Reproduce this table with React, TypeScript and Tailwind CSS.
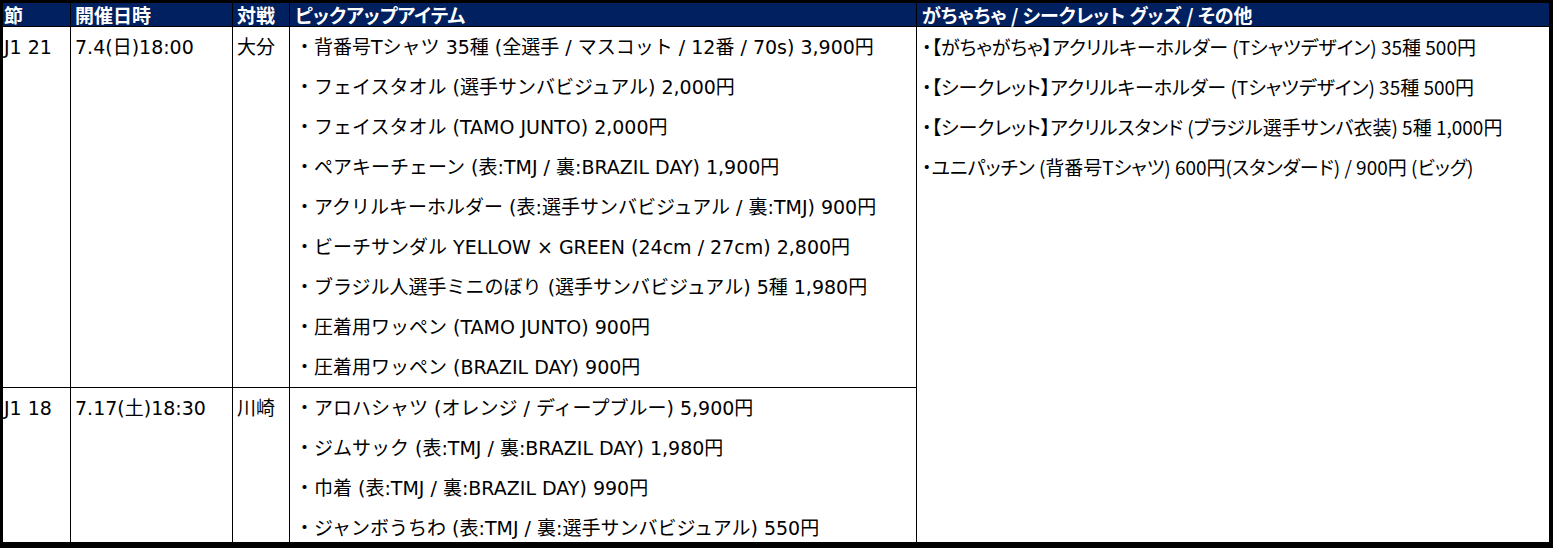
import React from "react";

const row1 = [
  "・背番号Tシャツ 35種 (全選手 / マスコット / 12番 / 70s) 3,900円",
  "・フェイスタオル (選手サンバビジュアル) 2,000円",
  "・フェイスタオル (TAMO JUNTO) 2,000円",
  "・ペアキーチェーン (表:TMJ / 裏:BRAZIL DAY) 1,900円",
  "・アクリルキーホルダー (表:選手サンバビジュアル / 裏:TMJ) 900円",
  "・ビーチサンダル YELLOW × GREEN (24cm / 27cm) 2,800円",
  "・ブラジル人選手ミニのぼり (選手サンバビジュアル) 5種 1,980円",
  "・圧着用ワッペン (TAMO JUNTO) 900円",
  "・圧着用ワッペン (BRAZIL DAY) 900円",
];

const row2 = [
  "・アロハシャツ (オレンジ / ディープブルー) 5,900円",
  "・ジムサック (表:TMJ / 裏:BRAZIL DAY) 1,980円",
  "・巾着 (表:TMJ / 裏:BRAZIL DAY) 990円",
  "・ジャンボうちわ (表:TMJ / 裏:選手サンバビジュアル) 550円",
];

const gacha = [
  "・【がちゃがちゃ】アクリルキーホルダー (Tシャツデザイン) 35種 500円",
  "・【シークレット】アクリルキーホルダー (Tシャツデザイン) 35種 500円",
  "・【シークレット】アクリルスタンド (ブラジル選手サンバ衣装) 5種 1,000円",
  "・ユニパッチン (背番号Tシャツ) 600円(スタンダード) / 900円 (ビッグ)",
];

const bodyFont =
  "[font-family:'DejaVu_Sans','Noto_Sans_CJK_JP',sans-serif] text-[19px] leading-[40px] text-black";

function MatchRow({
  sec,
  date,
  vs,
  items,
  last,
}: {
  sec: string;
  date: string;
  vs: string;
  items: string[];
  last?: boolean;
}) {
  return (
    <div className={`flex ${last ? "" : "border-b border-black"}`}>
      <div className={`w-[68px] shrink-0 border-r border-black pl-[1px] ${bodyFont}`}>{sec}</div>
      <div className={`w-[162px] shrink-0 border-r border-black pl-[4px] ${bodyFont}`}>{date}</div>
      <div className={`w-[57px] shrink-0 border-r border-black pl-[4px] ${bodyFont}`}>{vs}</div>
      <div className={`w-[627px] shrink-0 border-r border-black pl-[5px] ${bodyFont} whitespace-nowrap`}>
        {items.map((t) => (
          <div key={t}>{t}</div>
        ))}
      </div>
    </div>
  );
}

export default function App() {
  const head =
    "[font-family:'Noto_Sans_CJK_JP',sans-serif] [font-feature-settings:'palt'] font-bold text-[19px] leading-[23px] text-white";
  return (
    <div className="w-[1553px] h-[548px] overflow-hidden bg-white border-t-[3px] border-l-[3px] border-r-[4px] border-b-[6px] border-black">
      <div className="flex h-[24px] bg-[#002060] border-b border-black">
        <div className={`w-[68px] shrink-0 border-r border-black pl-[1px] ${head}`}>節</div>
        <div className={`w-[162px] shrink-0 border-r border-black pl-[4px] ${head}`}>開催日時</div>
        <div className={`w-[57px] shrink-0 border-r border-black pl-[4px] ${head}`}>対戦</div>
        <div className={`w-[627px] shrink-0 border-r border-black pl-[5px] ${head}`}>ピックアップアイテム</div>
        <div className={`flex-1 pl-[5px] ${head} whitespace-nowrap`}>がちゃちゃ / シークレット グッズ / その他</div>
      </div>
      <div className="flex">
        <div className="flex flex-col">
          <MatchRow sec="J1 21" date="7.4(日)18:00" vs="大分" items={row1} />
          <MatchRow sec="J1 18" date="7.17(土)18:30" vs="川崎" items={row2} last />
        </div>
        <div className="flex-1 pl-[5px] [font-family:'Noto_Sans_CJK_JP',sans-serif] [font-feature-settings:'palt'] text-[19px] leading-[40px] text-black whitespace-nowrap">
          {gacha.map((t) => (
            <div key={t}>{t}</div>
          ))}
        </div>
      </div>
    </div>
  );
}
